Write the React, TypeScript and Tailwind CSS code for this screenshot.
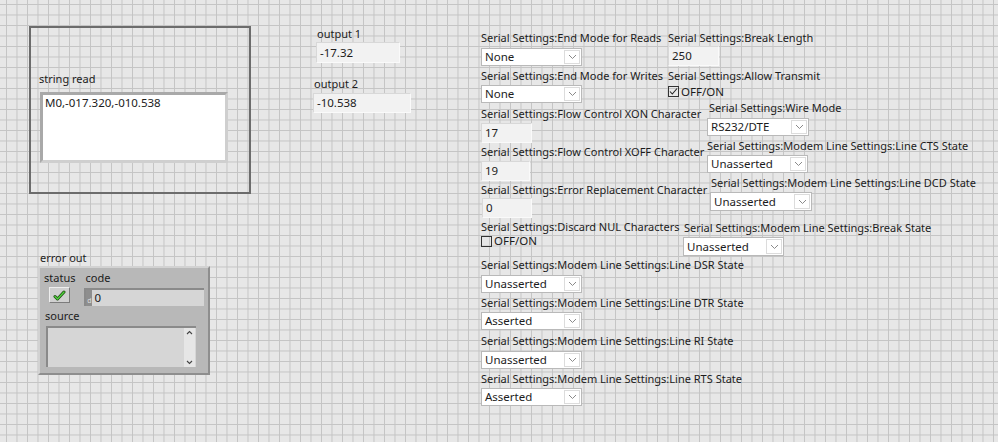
import React from 'react';

// LabVIEW front panel: controls live on a free grid canvas.

type Kind = 'ring' | 'num' | 'check';

interface Ctl {
  label: string;
  kind: Kind;
  value: string;
  w?: number;
  h?: number;
  gap?: number;
  dx?: number;
}

const Label: React.FC<{ text: string; className?: string }> = ({ text, className }) => (
  <div className={`whitespace-nowrap text-[11px] leading-[14px] text-[#1c1c1c] ${className || ''}`}>
    {text}
  </div>
);

const Chevron: React.FC = () => (
  <svg className="w-[9px] h-[6px]" viewBox="0 0 9 6" fill="none" stroke="#8a8a8a" strokeWidth={1}>
    <path d="M1 1l3.5 3.5L8 1" />
  </svg>
);

const Ring: React.FC<{ value: string; w: number; h: number }> = ({ value, w, h }) => (
  <div
    className="flex items-stretch bg-white border border-[#b9b9b9] text-[11.5px] leading-none text-[#1c1c1c]"
    style={{ width: w, height: h }}
  >
    <div className="flex-1 flex items-center pl-[3px]">{value}</div>
    <div className="w-[16px] flex items-center justify-center my-[1px] mr-[1px] border border-[#dcdcdc]">
      <Chevron />
    </div>
  </div>
);

const NumBox: React.FC<{ value: string; w: number; h: number }> = ({ value, w, h }) => (
  <div
    className="flex items-center pl-[3px] bg-[#f2f2f2] border border-t-[#d8d8d8] border-l-[#d8d8d8] border-b-[#fafafa] border-r-[#fafafa] text-[11.5px] leading-none text-[#1c1c1c]"
    style={{ width: w, height: h }}
  >
    {value}
  </div>
);

const Check: React.FC<{ checked: boolean }> = ({ checked }) => (
  <div className="flex items-center gap-[2px]">
    <div className="w-[11px] h-[11px] border border-[#333] flex items-center justify-center">
      {checked && (
        <svg className="w-[9px] h-[9px]" viewBox="0 0 9 9" fill="none" stroke="#222" strokeWidth={1.1}>
          <path d="M1 4.5l2.3 2.5L8 1.5" />
        </svg>
      )}
    </div>
    <span className="text-[11.5px] leading-none text-[#1c1c1c]">OFF/ON</span>
  </div>
);

const Control: React.FC<{ c: Ctl }> = ({ c }) => (
  <div className="flex flex-col items-start" style={{ gap: c.gap ?? 2 }}>
    <Label text={c.label} />
    <div style={{ marginLeft: c.dx ?? 0 }}>
      {c.kind === 'ring' && <Ring value={c.value} w={c.w ?? 101} h={c.h ?? 18} />}
      {c.kind === 'num' && <NumBox value={c.value} w={c.w ?? 51} h={c.h ?? 20} />}
      {c.kind === 'check' && <Check checked={c.value === 'on'} />}
    </div>
  </div>
);

const leftColumn: Ctl[] = [
  { label: 'Serial Settings:End Mode for Reads', kind: 'ring', value: 'None', gap: 3 },
  { label: 'Serial Settings:End Mode for Writes', kind: 'ring', value: 'None', gap: 2 },
  { label: 'Serial Settings:Flow Control XON Character', kind: 'num', value: '17', gap: 2 },
  { label: 'Serial Settings:Flow Control XOFF Character', kind: 'num', value: '19', w: 49, gap: 2.5 },
  { label: 'Serial Settings:Error Replacement Character', kind: 'num', value: '0', w: 50, gap: 1, dx: 1 },
  { label: 'Serial Settings:Discard NUL Characters', kind: 'check', value: 'off', gap: 1 },
  { label: 'Serial Settings:Modem Line Settings:Line DSR State', kind: 'ring', value: 'Unasserted', gap: 2.5 },
  { label: 'Serial Settings:Modem Line Settings:Line DTR State', kind: 'ring', value: 'Asserted', gap: 2 },
  { label: 'Serial Settings:Modem Line Settings:Line RI State', kind: 'ring', value: 'Unasserted', gap: 2.5 },
  { label: 'Serial Settings:Modem Line Settings:Line RTS State', kind: 'ring', value: 'Asserted', gap: 2 },
];

const scattered: { c: Ctl; x: number; y: number }[] = [
  { x: 668, y: 31, c: { label: 'Serial Settings:Break Length', kind: 'num', value: '250', gap: 1 } },
  { x: 668, y: 69, c: { label: 'Serial Settings:Allow Transmit', kind: 'check', value: 'on', gap: 3 } },
  { x: 709, y: 101, c: { label: 'Serial Settings:Wire Mode', kind: 'ring', value: 'RS232/DTE', w: 102, gap: 3, dx: -2 } },
  { x: 707, y: 139, c: { label: 'Serial Settings:Modem Line Settings:Line CTS State', kind: 'ring', value: 'Unasserted', gap: 2 } },
  { x: 711, y: 176, c: { label: 'Serial Settings:Modem Line Settings:Line DCD State', kind: 'ring', value: 'Unasserted', w: 102, h: 19, gap: 2, dx: -1 } },
  { x: 684, y: 220.5, c: { label: 'Serial Settings:Modem Line Settings:Break State', kind: 'ring', value: 'Unasserted', h: 19, gap: 2.5, dx: -1 } },
];

export default function App() {
  return (
    <div className="relative w-[998px] h-[442px] overflow-hidden font-['Noto_Sans',sans-serif] bg-[#e7e7e7] bg-[linear-gradient(to_right,#c4c4c4_1px,transparent_1px),linear-gradient(to_bottom,#c4c4c4_1px,transparent_1px)] bg-[size:10.5px_10.5px] bg-[position:6px_4px]">
      {/* decoration frame with string read indicator */}
      <div className="absolute left-[29px] top-[26px] w-[222px] h-[168px] border-2 border-[#6c6c6c] pl-[8px] pt-[44px]">
        <Label text="string read" />
        <div className="mt-[6px] ml-[1px] w-[188px] h-[71px] bg-white border-[3px] border-t-[#a9a9a9] border-l-[#a9a9a9] border-b-[#cfcfcf] border-r-[#cfcfcf] px-[2px] pt-[1px] text-[11.5px] leading-[14px] text-[#1c1c1c]">
          M0,-017.320,-010.538
        </div>
      </div>

      {/* numeric outputs */}
      <div className="absolute left-[316px] top-[27px] flex flex-col gap-[1px]">
        <Label text="output 1" className="ml-[1px]" />
        <NumBox value="-17.32" w={84} h={21} />
      </div>
      <div className="absolute left-[313px] top-[77px] flex flex-col gap-[2px]">
        <Label text="output 2" className="ml-[1px]" />
        <NumBox value="-10.538" w={98} h={20} />
      </div>

      {/* error out cluster */}
      <div className="absolute left-[38px] top-[251px] flex flex-col gap-[1px]">
        <Label text="error out" className="ml-[2px]" />
        <div className="w-[172px] h-[109px] bg-[#b8b8b8] border-2 border-t-[#d2d2d2] border-l-[#d2d2d2] border-b-[#8e8e8e] border-r-[#8e8e8e] px-[4px] pt-[3px] flex flex-col">
          <div className="flex gap-[10px]">
            <div className="flex flex-col items-start gap-[2px]">
              <Label text="status" />
              <div className="ml-[5px] w-[21px] h-[16px] bg-[#d0d0d0] border border-t-[#eeeeee] border-l-[#eeeeee] border-b-[#7c7c7c] border-r-[#7c7c7c] flex items-center justify-center">
                <svg className="w-[13px] h-[11px]" viewBox="0 0 13 11">
                  <path d="M2 6.5l2.5 2.5L11 2" fill="none" stroke="#1e4a12" strokeWidth={3} strokeLinecap="round" strokeLinejoin="round" />
                  <path d="M2 6.5l2.5 2.5L11 2" fill="none" stroke="#4fd33c" strokeWidth={1.4} strokeLinecap="round" strokeLinejoin="round" />
                </svg>
              </div>
            </div>
            <div className="flex flex-col items-start gap-[3px]">
              <Label text="code" />
              <div className="-ml-[1px] w-[120px] h-[18px] bg-[#d6d6d6] border-t-2 border-l-2 border-t-[#8a8a8a] border-l-[#8a8a8a] flex items-stretch">
                <div className="w-[6px] bg-[#8e8e8e] text-[7px] leading-none text-[#dedede] flex items-end justify-center pb-[2px]">d</div>
                <div className="pl-[2px] flex items-center text-[11.5px] leading-none text-[#1c1c1c]">0</div>
              </div>
            </div>
          </div>
          <Label text="source" className="mt-[3px] ml-[1px]" />
          <div className="mt-[3px] ml-[2px] w-[150px] h-[41px] bg-[#d6d6d6] border-t-2 border-l-2 border-t-[#8a8a8a] border-l-[#8a8a8a] flex justify-end">
            <div className="w-[11px] bg-[#e6e6e6] flex flex-col items-center justify-between py-[2px] mr-[1px]">
              <svg className="w-[7px] h-[5px]" viewBox="0 0 7 5" fill="none" stroke="#444" strokeWidth={1.1}>
                <path d="M1 4l2.5-2.5L6 4" />
              </svg>
              <svg className="w-[7px] h-[5px]" viewBox="0 0 7 5" fill="none" stroke="#444" strokeWidth={1.1}>
                <path d="M1 1l2.5 2.5L6 1" />
              </svg>
            </div>
          </div>
        </div>
      </div>

      {/* serial settings, left column */}
      <div className="absolute left-[481px] top-[31px] flex flex-col">
        {leftColumn.map((c) => (
          <div key={c.label} className="h-[37.9px]">
            <Control c={c} />
          </div>
        ))}
      </div>

      {/* serial settings placed freely */}
      {scattered.map(({ c, x, y }) => (
        <div key={c.label} className="absolute" style={{ left: x, top: y }}>
          <Control c={c} />
        </div>
      ))}
    </div>
  );
}
